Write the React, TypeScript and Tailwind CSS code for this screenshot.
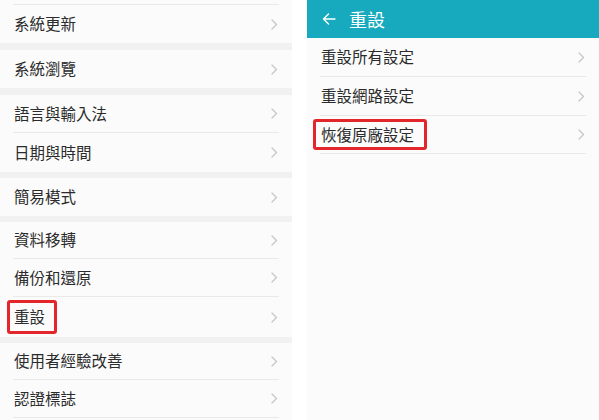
type Item =
  | { kind: 'row'; label: string; h: number; marked?: boolean }
  | { kind: 'line' }
  | { kind: 'band'; h: number }
  | { kind: 'gap'; h: number };

const LEFT_ITEMS: Item[] = [
  { kind: 'gap', h: 4 },
  { kind: 'line' },
  { kind: 'row', label: '系統更新', h: 38 },
  { kind: 'band', h: 7 },
  { kind: 'row', label: '系統瀏覽', h: 38 },
  { kind: 'band', h: 7 },
  { kind: 'row', label: '語言與輸入法', h: 37 },
  { kind: 'line' },
  { kind: 'row', label: '日期與時間', h: 39 },
  { kind: 'band', h: 6 },
  { kind: 'row', label: '簡易模式', h: 38 },
  { kind: 'band', h: 6 },
  { kind: 'row', label: '資料移轉', h: 36 },
  { kind: 'line' },
  { kind: 'row', label: '備份和還原', h: 37 },
  { kind: 'line' },
  { kind: 'row', label: '重設', h: 40, marked: true },
  { kind: 'band', h: 6 },
  { kind: 'row', label: '使用者經驗改善', h: 36 },
  { kind: 'line' },
  { kind: 'row', label: '認證標誌', h: 37 },
  { kind: 'line' },
];

const RIGHT_ITEMS: Item[] = [
  { kind: 'row', label: '重設所有設定', h: 38 },
  { kind: 'line' },
  { kind: 'row', label: '重設網路設定', h: 38 },
  { kind: 'line' },
  { kind: 'row', label: '恢復原廠設定', h: 37, marked: true },
  { kind: 'line' },
];

const FONT = { fontFamily: '"Noto Sans CJK TC", "Noto Sans", sans-serif' };

const Chevron = () => (
  <svg width="7" height="11" viewBox="0 0 7 11" className="shrink-0">
    <polyline
      points="1,1 5.5,5.5 1,10"
      fill="none"
      stroke="#c6c6c6"
      strokeWidth="1.2"
      strokeLinecap="round"
      strokeLinejoin="round"
    />
  </svg>
);

const Row = ({ label, h, marked, boxLeft }: { label: string; h: number; marked?: boolean; boxLeft: string }) => (
  <div className="relative flex items-center justify-between pl-[14px] pr-[14px]" style={{ height: h }}>
    <span className="text-[15.5px] leading-none text-[#2b2b2b]">{label}</span>
    <Chevron />
    {marked && (
      <div
        className={`pointer-events-none absolute top-[3px] bottom-[3px] rounded-[3px] border-[3px] border-[#e3262c] ${boxLeft}`}
      />
    )}
  </div>
);

const List = ({ items, boxLeft }: { items: Item[]; boxLeft: string }) => (
  <div className="flex flex-col">
    {items.map((item, index) => {
      if (item.kind === 'line') {
        return <div key={index} className="mx-[13px] h-px bg-[#e9e9e9]" />;
      }
      if (item.kind === 'band') {
        return <div key={index} className="bg-[#f1f1f1]" style={{ height: item.h }} />;
      }
      if (item.kind === 'gap') {
        return <div key={index} style={{ height: item.h }} />;
      }
      return <Row key={index} label={item.label} h={item.h} marked={item.marked} boxLeft={boxLeft} />;
    })}
  </div>
);

export default function App() {
  return (
    <div className="flex h-[420px] w-[599px] overflow-hidden bg-white" style={FONT}>
      <div className="w-[292px] shrink-0 bg-[#fbfbfb]">
        <List items={LEFT_ITEMS} boxLeft="left-[7px] w-[50px]" />
      </div>
      <div className="w-[15px] shrink-0 bg-white" />
      <div className="flex-1 bg-[#fbfbfb]">
        <div className="flex h-[38px] items-center gap-[13px] bg-[#17aabe] pl-[15px] text-white">
          <svg width="14" height="12" viewBox="0 0 14 12">
            <path d="M13 6H1.5M6.5 1L1.5 6l5 5" fill="none" stroke="#ffffff" strokeWidth="1.4" strokeLinecap="round" strokeLinejoin="round" />
          </svg>
          <span className="text-[18px] leading-none">重設</span>
        </div>
        <List items={RIGHT_ITEMS} boxLeft="left-[6px] w-[114px]" />
      </div>
    </div>
  );
}
